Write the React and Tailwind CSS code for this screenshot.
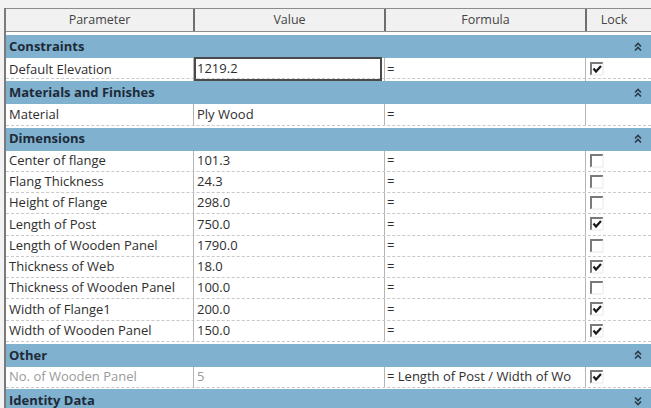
import React from "react";

const COLS = "grid grid-cols-[187px_191px_201px_1fr]";

function Check({ checked }) {
  return (
    <svg width="14" height="14" viewBox="0 0 14 14" className="block">
      <rect x="0" y="0" width="14" height="14" fill="#ffffff" />
      <path d="M1 13 V1 H13" fill="none" stroke="#7a7a7a" strokeWidth="2" />
      <path d="M1 13 H13 V1" fill="none" stroke="#e8e8e8" strokeWidth="1" />
      {checked && (
        <path d="M3.5 6.5 L6 9.5 L11 4" fill="none" stroke="#1a1a1a" strokeWidth="2.2" />
      )}
    </svg>
  );
}

function Chevrons({ down }) {
  return (
    <svg width="8" height="10" viewBox="0 0 8 10" className={down ? "block rotate-180" : "block"}>
      <path d="M1 4.5 L4 1.5 L7 4.5" fill="none" stroke="#2b3a48" strokeWidth="1.6" />
      <path d="M1 8.5 L4 5.5 L7 8.5" fill="none" stroke="#2b3a48" strokeWidth="1.6" />
    </svg>
  );
}

function Band({ title, down, mt = "mt-[2px]" }) {
  return (
    <div className={`${mt} h-[23px] bg-[#80b1cf] flex items-center justify-between pl-[3px] pr-[9px]`}>
      <span className="font-bold text-[13px] text-[#1d2a38]">{title}</span>
      <Chevrons down={down} />
    </div>
  );
}

function Row({ name, value, formula = "=", lock, editing, dim, h = "h-[21.25px]" }) {
  return (
    <div className={`${COLS} ${h} border-b border-dashed border-[#c9c9c9] text-[13px] text-[#2e2e2e]`}>
      <div className={`flex items-center pl-[3px] ${dim ? "text-[#9a9a9a]" : ""}`}>{name}</div>
      <div className="border-l border-[#b5b5b5] flex items-stretch">
        {editing ? (
          <div className="flex-1 mr-[2px] border-2 border-[#4a4a4a] flex items-center pl-[1px] -mt-[1px]">{value}</div>
        ) : (
          <div className={`flex items-center pl-[3px] ${dim ? "text-[#9a9a9a]" : ""}`}>{value}</div>
        )}
      </div>
      <div className="border-l border-[#b5b5b5] flex items-center pl-[2px] whitespace-nowrap overflow-hidden">{formula}</div>
      <div className="border-l border-[#b5b5b5] flex items-center pl-[4px]">
        {lock !== undefined && <Check checked={lock} />}
      </div>
    </div>
  );
}

export default function App() {
  const dims = [
    ["Center of flange", "101.3", false],
    ["Flang Thickness", "24.3", false],
    ["Height of Flange", "298.0", false],
    ["Length of Post", "750.0", true],
    ["Length of Wooden Panel", "1790.0", false],
    ["Thickness of Web", "18.0", true],
    ["Thickness of Wooden Panel", "100.0", false],
    ["Width of Flange1", "200.0", true],
    ["Width of Wooden Panel", "150.0", true],
  ];
  return (
    <div className="w-[651px] h-[408px] overflow-hidden bg-[#f2f2f2] pt-[8px] pl-[4px] font-['Open_Sans',sans-serif]">
      <div className="h-full bg-white border-l-2 border-[#7a7a7a]">
        <div className={`${COLS} h-[24px] bg-[#f1f1f1] border-t border-b border-[#8c8c8c] text-[12.5px] text-[#444]`}>
          <div className="flex items-center justify-center">Parameter</div>
          <div className="flex items-center justify-center border-l-2 border-[#6e6e6e]">Value</div>
          <div className="flex items-center justify-center border-l-2 border-[#6e6e6e]">Formula</div>
          <div className="flex items-center justify-center border-l-2 border-[#6e6e6e] pr-[10px]">Lock</div>
        </div>
        <div className="h-[1px]" />
        <Band title="Constraints" />
        <Row name="Default Elevation" value="1219.2" lock={true} editing h="h-[21px]" />
        <Band title="Materials and Finishes" />
        <Row name="Material" value="Ply Wood" h="h-[21.5px]" />
        <Band title="Dimensions" />
        {dims.map(([n, v, l]) => (
          <Row key={n} name={n} value={v} lock={l} />
        ))}
        <Band title="Other" />
        <Row name="No. of Wooden Panel" value="5" formula="= Length of Post / Width of Wo" lock={true} dim />
        <Band title="Identity Data" down mt="mt-[1px]" />
      </div>
    </div>
  );
}
